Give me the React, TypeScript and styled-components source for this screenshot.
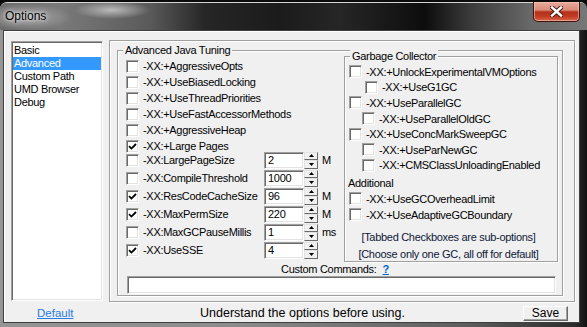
import React from "react"
import styled, { createGlobalStyle } from "styled-components"

const GlobalStyle = createGlobalStyle`
  html, body { margin: 0; padding: 0; }
  body {
    width: 587px;
    height: 327px;
    overflow: hidden;
    background: #0b0b0b;
    font-family: "Liberation Sans", Arial, sans-serif;
  }
`

const ui = `
  font-family: "Liberation Sans", Arial, sans-serif;
  font-size: 11px;
  letter-spacing: -0.3px;
  color: #000;
`

const sunken = `
  box-sizing: border-box;
  background: #fff;
  border: 1px solid;
  border-color: #a0a0a0 #fff #fff #a0a0a0;
  box-shadow: inset 1px 1px 0 #696969, inset -1px -1px 0 #e3e3e3;
`

const Window = styled.div`
  width: 587px;
  height: 325px;
  margin-top: 2px;
  box-sizing: border-box;
  border-top: 1px solid #d4d4d4;
  border-radius: 7px 7px 0 0;
  display: flex;
  flex-direction: column;
  background: linear-gradient(to right, #959595 0, #8c8c8c 40%, #5c5c5c 80%, #2c2c2c 98%, #121212 100%);
`

const TitleBar = styled.div`
  height: 27px;
  display: flex;
  align-items: flex-start;
  border-radius: 6px 6px 0 0;
  background:
    radial-gradient(ellipse 38px 9px at 112px 7px, rgba(215, 215, 215, 0.75), transparent),
    radial-gradient(ellipse 46px 13px at 26px 14px, rgba(225, 225, 225, 0.5), transparent),
    linear-gradient(to right, #6c6c6c 0, #7a7a7a 60px, #5a5a5a 150px, #262626 205px, #1b1b1b 280px, #262626 340px, #0d0d0d 425px, #3a3a3a 470px, #686868 530px, #777 587px);
`

const Title = styled.div`
  padding: 6px 0 0 5px;
  font-size: 12px;
  line-height: 14px;
  color: #000;
  text-shadow: 0 0 6px rgba(255, 255, 255, 0.9), 0 0 3px rgba(255, 255, 255, 0.7);
`

const CloseButton = styled.div`
  width: 47px;
  height: 20px;
  margin: -1px 7px 0 auto;
  box-sizing: border-box;
  border: 1px solid #3b140c;
  border-top: none;
  border-radius: 0 0 5px 5px;
  display: flex;
  align-items: center;
  justify-content: center;
  background: linear-gradient(to bottom, #e6aa9c 0, #d98d7b 42%, #b5301b 52%, #c03a22 75%, #d5674d 100%);
  box-shadow: inset 0 0 0 1px rgba(255, 205, 195, 0.55);
`

const Client = styled.div`
  margin: 0 7px 0 3px;
  height: 293px;
  box-sizing: border-box;
  border: 1px solid #3f3f3f;
  background: #f0f0f0;
  box-shadow: inset 1px 1px 0 #fff;
  display: flex;
  flex-direction: column;
`

const MainRow = styled.div`
  display: flex;
  align-items: flex-start;
  gap: 6px;
  padding: 9px 3px 0 7px;
`

const PageList = styled.div`
  ${sunken}
  width: 92px;
  height: 260px;
  margin-top: 1px;
  padding: 2px 1px;
`

const PageItem = styled.div<{ $selected?: boolean }>`
  ${ui}
  line-height: 13px;
  height: 13px;
  padding-left: 1px;
  background: ${(p) => (p.$selected ? "#3399ff" : "transparent")};
  color: ${(p) => (p.$selected ? "#fff" : "#000")};
`

const Panel = styled.div`
  width: 466px;
  height: 262px;
  box-sizing: border-box;
  border: 1px solid #a0a0a0;
  box-shadow: inset 1px 1px 0 #fff, 1px 1px 0 #fff;
  padding: 3px 11px 0 7px;
`

const Group = styled.fieldset`
  margin: 0;
  min-width: 0;
  border: 1px solid #a0a0a0;
  box-shadow: inset 1px 1px 0 #fff, 1px 1px 0 #fff;
  padding: 1px 4px 0 8px;
`

const GcGroup = styled(Group)`
  margin-top: -8px;
  padding: 1px 3px 0 4px;
  height: 212px;
  box-sizing: border-box;
`

const Legend = styled.legend<{ $shift?: number }>`
  ${ui}
  line-height: 13px;
  padding: 0 2px;
  margin-left: ${(p) => p.$shift ?? -3}px;
  background: #f0f0f0;
`

const Columns = styled.div`
  display: grid;
  grid-template-columns: 218px 214px;
  align-items: start;
`

const Column = styled.div`
  display: flex;
  flex-direction: column;
`

const Row = styled.div<{ $h: number; $indent?: number }>`
  display: flex;
  align-items: center;
  height: ${(p) => p.$h}px;
  padding-left: ${(p) => p.$indent ?? 0}px;
`

const SpinRows = styled.div`
  display: flex;
  flex-direction: column;
  margin-top: -3px;
`

const Box = styled.div`
  ${sunken}
  width: 13px;
  height: 13px;
  flex: none;
  display: flex;
  align-items: center;
  justify-content: center;
`

const Label = styled.span<{ $w?: number }>`
  ${ui}
  margin-left: 4px;
  white-space: nowrap;
  ${(p) => (p.$w ? `width: ${p.$w}px; flex: none;` : "")}
`

const NumField = styled.div`
  ${sunken}
  ${ui}
  width: 40px;
  height: 17px;
  line-height: 15px;
  padding-left: 3px;
`

const Spin = styled.div`
  width: 14px;
  height: 17px;
  display: flex;
  flex-direction: column;
`

const SpinHalf = styled.div`
  flex: 1;
  box-sizing: border-box;
  background: #f0f0f0;
  border: 1px solid;
  border-color: #e3e3e3 #696969 #696969 #e3e3e3;
  display: flex;
  align-items: center;
  justify-content: center;
`

const Unit = styled.span`
  ${ui}
  margin-left: 4px;
`

const Section = styled.div`
  ${ui}
  height: 16px;
  line-height: 16px;
  margin: 2px 0 0 -1px;
`

const Note = styled.div<{ $gap: number }>`
  ${ui}
  color: #0e1838;
  line-height: 14px;
  text-align: center;
  margin-top: ${(p) => p.$gap}px;
  padding-right: 6px;
`

const CustomLabel = styled.div`
  ${ui}
  height: 14px;
  line-height: 14px;
  text-align: center;
  padding-right: 14px;
`

const Help = styled.span`
  color: #0066cc;
  font-weight: bold;
  text-decoration: underline;
  margin-left: 6px;
`

const CustomInput = styled.div`
  ${sunken}
  width: 429px;
  height: 18px;
  margin: 0 0 1px 1px;
`

const BottomRow = styled.div`
  display: flex;
  align-items: flex-end;
  height: 20px;
  padding-bottom: 1px;
  box-sizing: border-box;
`

const DefaultLink = styled.div`
  width: 196px;
  box-sizing: border-box;
  padding-left: 33px;
  font-size: 11.5px;
  line-height: 15px;
  color: #2a7de1;
  text-decoration: underline;
`

const Hint = styled.div`
  font-size: 12.5px;
  line-height: 15px;
  color: #000;
`

const SaveButton = styled.div`
  width: 45px;
  height: 15px;
  margin: 0 11px 0 auto;
  box-sizing: border-box;
  border: 1px solid;
  border-color: #fff #696969 #696969 #fff;
  box-shadow: inset -1px -1px 0 #a0a0a0;
  background: #f0f0f0;
  font-size: 12px;
  line-height: 13px;
  text-align: center;
  color: #000;
`

function Check({ on }: { on?: boolean }) {
  return (
    <Box>
      {on && (
        <svg width="9" height="9" viewBox="0 0 9 9">
          <path d="M1 4.2 L3.4 6.6 L8 2" fill="none" stroke="#000" strokeWidth="1.8" />
        </svg>
      )}
    </Box>
  )
}

function Arrow({ down }: { down?: boolean }) {
  return (
    <svg width="5" height="3" viewBox="0 0 5 3">
      <path d={down ? "M0 0 L5 0 L2.5 3Z" : "M0 3 L2.5 0 L5 3Z"} fill="#000" />
    </svg>
  )
}

const pages = ["Basic", "Advanced", "Custom Path", "UMD Browser", "Debug"]

const flags = [
  { label: "-XX:+AggressiveOpts", on: false },
  { label: "-XX:+UseBiasedLocking", on: false },
  { label: "-XX:+UseThreadPriorities", on: false },
  { label: "-XX:+UseFastAccessorMethods", on: false },
  { label: "-XX:+AggressiveHeap", on: false },
  { label: "-XX:+Large Pages", on: true },
]

const sizes = [
  { label: "-XX:LargePageSize", value: "2", unit: "M", on: false },
  { label: "-XX:CompileThreshold", value: "1000", unit: "", on: false },
  { label: "-XX:ResCodeCacheSize", value: "96", unit: "M", on: true },
  { label: "-XX:MaxPermSize", value: "220", unit: "M", on: true },
  { label: "-XX:MaxGCPauseMillis", value: "1", unit: "ms", on: false },
  { label: "-XX:UseSSE", value: "4", unit: "", on: true },
]

const collectors = [
  { label: "-XX:+UnlockExperimentalVMOptions", indent: 0 },
  { label: "-XX:+UseG1GC", indent: 16 },
  { label: "-XX:+UseParallelGC", indent: 0 },
  { label: "-XX:+UseParallelOldGC", indent: 13 },
  { label: "-XX:+UseConcMarkSweepGC", indent: 0 },
  { label: "-XX:+UseParNewGC", indent: 13 },
  { label: "-XX:+CMSClassUnloadingEnabled", indent: 13 },
]

const extras = ["-XX:+UseGCOverheadLimit", "-XX:+UseAdaptiveGCBoundary"]

export default function App() {
  return (
    <>
      <GlobalStyle />
      <Window>
        <TitleBar>
          <Title>Options</Title>
          <CloseButton>
            <svg width="13" height="11" viewBox="0 0 13 11">
              <path d="M2 1.5 L11 9.5 M11 1.5 L2 9.5" stroke="#4a1c12" strokeWidth="4.4" strokeLinecap="square" />
              <path d="M2 1.5 L11 9.5 M11 1.5 L2 9.5" stroke="#fff" strokeWidth="2.4" strokeLinecap="square" />
            </svg>
          </CloseButton>
        </TitleBar>
        <Client>
          <MainRow>
            <PageList>
              {pages.map((p) => (
                <PageItem key={p} $selected={p === "Advanced"}>
                  {p}
                </PageItem>
              ))}
            </PageList>
            <Panel>
              <Group>
                <Legend>Advanced Java Tuning</Legend>
                <Columns>
                  <Column>
                    {flags.map((f) => (
                      <Row key={f.label} $h={16}>
                        <Check on={f.on} />
                        <Label>{f.label}</Label>
                      </Row>
                    ))}
                    <SpinRows>
                      {sizes.map((s) => (
                        <Row key={s.label} $h={18}>
                          <Check on={s.on} />
                          <Label $w={121}>{s.label}</Label>
                          <NumField>{s.value}</NumField>
                          <Spin>
                            <SpinHalf>
                              <Arrow />
                            </SpinHalf>
                            <SpinHalf>
                              <Arrow down />
                            </SpinHalf>
                          </Spin>
                          {s.unit && <Unit>{s.unit}</Unit>}
                        </Row>
                      ))}
                    </SpinRows>
                  </Column>
                  <GcGroup>
                    <Legend $shift={1}>Garbage Collector</Legend>
                    {collectors.map((c) => (
                      <Row key={c.label} $h={15.6} $indent={c.indent}>
                        <Check />
                        <Label>{c.label}</Label>
                      </Row>
                    ))}
                    <Section>Additional</Section>
                    {extras.map((e) => (
                      <Row key={e} $h={15.6} $indent={-1}>
                        <Check />
                        <Label>{e}</Label>
                      </Row>
                    ))}
                    <Note $gap={7.6}>[Tabbed Checkboxes are sub-options]</Note>
                    <Note $gap={3}>[Choose only one GC, all off for default]</Note>
                  </GcGroup>
                </Columns>
                <CustomLabel>
                  Custom Commands:<Help>?</Help>
                </CustomLabel>
                <CustomInput />
              </Group>
            </Panel>
          </MainRow>
          <BottomRow>
            <DefaultLink>Default</DefaultLink>
            <Hint>Understand the options before using.</Hint>
            <SaveButton>Save</SaveButton>
          </BottomRow>
        </Client>
      </Window>
    </>
  )
}
